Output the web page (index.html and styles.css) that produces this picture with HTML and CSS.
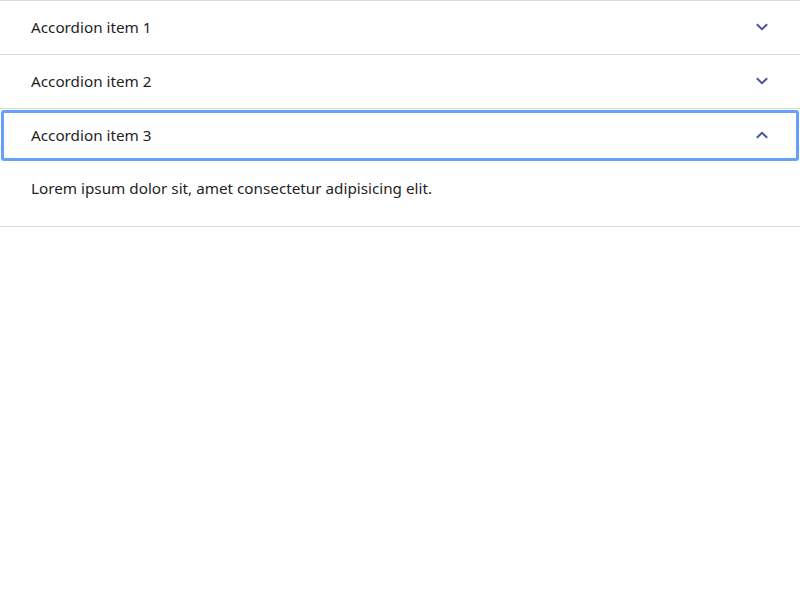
FILE: index.html
```html
<!DOCTYPE html>
<html lang="en">
<head>
<meta charset="utf-8">
<title>Accordion</title>
<link rel="stylesheet" href="styles.css">
</head>
<body>
<div class="accordion">
  <div class="item">
    <button class="header" type="button">
      <span class="title">Accordion item 1</span>
      <svg class="chevron" width="12" height="8" viewBox="0 0 12 8"><path d="M0.8 1.2 L6 6.2 L11.2 1.2" fill="none" stroke="#4b52a3" stroke-width="2"/></svg>
    </button>
  </div>
  <div class="item">
    <button class="header" type="button">
      <span class="title">Accordion item 2</span>
      <svg class="chevron" width="12" height="8" viewBox="0 0 12 8"><path d="M0.8 1.2 L6 6.2 L11.2 1.2" fill="none" stroke="#4b52a3" stroke-width="2"/></svg>
    </button>
  </div>
  <div class="item open">
    <button class="header focused" type="button">
      <span class="title">Accordion item 3</span>
      <svg class="chevron" width="12" height="8" viewBox="0 0 12 8"><path d="M0.8 6.8 L6 1.8 L11.2 6.8" fill="none" stroke="#4b52a3" stroke-width="2"/></svg>
    </button>
    <div class="content">Lorem ipsum dolor sit, amet consectetur adipisicing elit.</div>
  </div>
</div>
</body>
</html>
```
FILE: styles.css
```css
html, body {
  margin: 0;
  padding: 0;
  background: #ffffff;
}
body {
  font-family: "Noto Sans", "Open Sans", sans-serif;
  font-size: 15.25px;
  color: #1f1f1f;
}
.accordion {
  border-bottom: 1px solid #dcdcdc;
}
.item {
  border-top: 1px solid #dcdcdc;
}
.header {
  display: flex;
  align-items: center;
  justify-content: space-between;
  width: 100%;
  height: 53px;
  padding: 0 32px 1px 31px;
  margin: 0;
  border: 0;
  background: #ffffff;
  font: inherit;
  color: inherit;
  line-height: 22px;
  text-align: left;
  cursor: pointer;
  box-sizing: border-box;
}
.chevron {
  display: block;
}
.focused {
  outline: 3px solid #64a2f8;
  outline-offset: -4px;
  border-radius: 4px;
}
.content {
  padding: 15px 31px 27px;
  line-height: 22px;
}
```
